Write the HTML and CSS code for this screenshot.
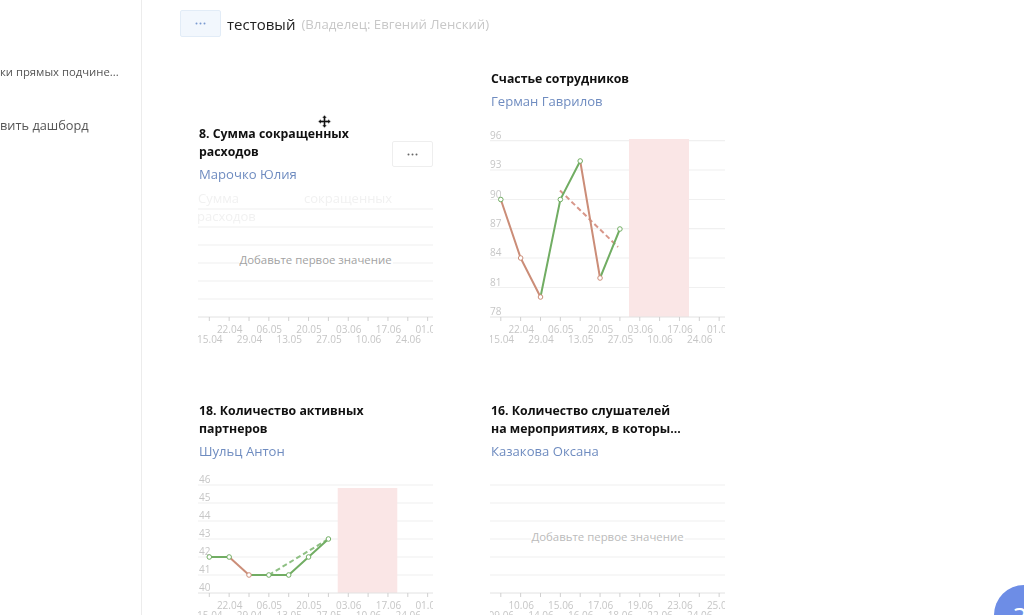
FILE: index.html
```html
<!DOCTYPE html>
<html lang="ru">
<head>
<meta charset="utf-8">
<title>Дашборд</title>
<link rel="stylesheet" href="styles.css">
</head>
<body>
<div class="app">
  <aside class="sidebar">
    <div class="side-item side-small">ки прямых подчине...</div>
    <div class="side-item">вить дашборд</div>
  </aside>
  <main class="main">
    <header class="head">
      <button class="dots-btn dots-blue" type="button"><svg width="11" height="3" viewBox="0 0 11 3"><circle cx="1.5" cy="1.5" r="1"/><circle cx="5.5" cy="1.5" r="1"/><circle cx="9.5" cy="1.5" r="1"/></svg></button>
      <h1 class="head-title">тестовый</h1>
      <span class="head-owner">(Владелец: Евгений Ленский)</span>
    </header>
    <section class="grid">

      <article class="card">
        <h2 class="card-title">8. Сумма сокращенных<br>расходов</h2>
        <a class="card-author">Марочко Юлия</a>
        <div class="chart">
          <svg width="235" height="155" viewBox="0 0 235 155">
            <g class="lines"><path d="M0 19H235M0 37H235M0 55H235M0 73H235M0 91H235M0 109H235"/></g>
            <path class="axis" d="M0 127H235"/>
            <path class="ticks" d="M11.3 127v4M31.15 127v4M51 127v4M70.85 127v4M90.7 127v4M110.55 127v4M130.4 127v4M150.25 127v4M170.1 127v4M189.95 127v4M209.8 127v4M229.65 127v4"/>
            <text class="ghost" x="0" y="13">Сумма</text>
            <text class="ghost" x="106" y="13">сокращенных</text>
            <text class="ghost" x="-1" y="31">расходов</text>
            <g class="xlab">
              <text x="31.65" y="143">22.04</text><text x="71.35" y="143">06.05</text><text x="111.05" y="143">20.05</text><text x="150.75" y="143">03.06</text><text x="190.45" y="143">17.06</text><text x="230.15" y="143">01.07</text>
              <text x="11.8" y="153">15.04</text><text x="51.5" y="153">29.04</text><text x="91.2" y="153">13.05</text><text x="130.9" y="153">27.05</text><text x="170.6" y="153">10.06</text><text x="210.3" y="153">24.06</text>
            </g>
          </svg>
          <span class="empty">Добавьте первое значение</span>
        </div>
        <button class="dots-btn card-menu" type="button"><svg width="11" height="3" viewBox="0 0 11 3"><circle cx="1.5" cy="1.5" r="1"/><circle cx="5.5" cy="1.5" r="1"/><circle cx="9.5" cy="1.5" r="1"/></svg></button>
        <svg class="move-cursor" width="15" height="15" viewBox="0 0 15 15"><path class="cursor-halo" d="M7.5 .5l3 3.300H9V6h2.200V4.500L14.500 7.500l-3.300 3V9H9v2.200h1.500l-3 3.300-3-3.300H6V9H3.800v1.500L.5 7.500l3.300-3V6H6V3.800H4.500z"/><path class="cursor-arrows" d="M7.500 1.500l2 2.300H8.200V6.800h3V5.500l2.300 2-2.300 2V8.200h-3v3h1.300l-2 2.300-2-2.300h1.300v-3h-3v1.300l-2.300-2 2.300-2v1.300h3v-3H5.500z"/></svg>
      </article>

      <article class="card">
        <h2 class="card-title">Счастье сотрудников</h2>
        <a class="card-author">Герман Гаврилов</a>
        <div class="chart">
          <svg width="235" height="228" viewBox="0 0 235 228">
            <g class="lines"><path d="M0 23.700H235M0 53H235M0 82.500H235M0 111.700H235M0 141H235M0 170.500H235"/></g>
            <rect class="band" x="139" y="22" width="60" height="178"/>
            <path class="axis" d="M0 200H235"/>
            <path class="ticks" d="M10.800 200v4M30.650 200v4M50.500 200v4M70.350 200v4M90.200 200v4M110.050 200v4M129.900 200v4M149.750 200v4M169.600 200v4M189.450 200v4M209.300 200v4M229.150 200v4"/>
            <g class="ylab"><text x="0" y="21.500">96</text><text x="0" y="51">93</text><text x="0" y="80.500">90</text><text x="0" y="109.700">87</text><text x="0" y="139">84</text><text x="0" y="168.500">81</text><text x="0" y="198">78</text></g>
            <path class="trend-red" d="M70 73.500L128 130"/>
            <path class="seg-red" d="M10.800 82.500L30.650 141L50.500 180M90.200 44L110.050 161"/>
            <path class="seg-green" d="M50.500 180L70.350 82.500L90.200 44M110.050 161L129.900 112"/>
            <g class="pt-green"><circle cx="10.800" cy="82.500" r="2.300"/><circle cx="70.350" cy="82.500" r="2.300"/><circle cx="90.200" cy="44" r="2.300"/><circle cx="129.900" cy="112" r="2.300"/></g>
            <g class="pt-red"><circle cx="30.650" cy="141" r="2.300"/><circle cx="50.500" cy="180" r="2.300"/><circle cx="110.050" cy="161" r="2.300"/></g>
            <g class="xlab">
              <text x="31.150" y="216">22.04</text><text x="70.850" y="216">06.05</text><text x="110.550" y="216">20.05</text><text x="150.250" y="216">03.06</text><text x="189.950" y="216">17.06</text><text x="229.650" y="216">01.07</text>
              <text x="11.300" y="226">15.04</text><text x="51" y="226">29.04</text><text x="90.700" y="226">13.05</text><text x="130.400" y="226">27.05</text><text x="170.100" y="226">10.06</text><text x="209.800" y="226">24.06</text>
            </g>
          </svg>
        </div>
      </article>

      <article class="card">
        <h2 class="card-title">18. Количество активных<br>партнеров</h2>
        <a class="card-author">Шульц Антон</a>
        <div class="chart">
          <svg width="235" height="155" viewBox="0 0 235 155">
            <g class="lines"><path d="M0 18H235M0 36H235M0 54H235M0 72H235M0 90H235M0 108H235"/></g>
            <rect class="band" x="139.700" y="21" width="59.600" height="105"/>
            <path class="axis" d="M0 126H235"/>
            <path class="ticks" d="M11.300 126v4M31.150 126v4M51 126v4M70.850 126v4M90.700 126v4M110.550 126v4M130.400 126v4M150.250 126v4M170.100 126v4M189.950 126v4M209.800 126v4M229.650 126v4"/>
            <g class="ylab"><text x="1" y="16">46</text><text x="1" y="34">45</text><text x="1" y="52">44</text><text x="1" y="70">43</text><text x="1" y="88">42</text><text x="1" y="106">41</text><text x="1" y="124">40</text></g>
            <path class="trend-green" d="M70.850 108L130.400 72"/>
            <path class="seg-red" d="M31.150 90L51 108"/>
            <path class="seg-green" d="M11.300 90L31.150 90M51 108L70.850 108L90.700 108L110.550 90L130.400 72"/>
            <g class="pt-green"><circle cx="11.300" cy="90" r="2.300"/><circle cx="31.150" cy="90" r="2.300"/><circle cx="70.850" cy="108" r="2.300"/><circle cx="90.700" cy="108" r="2.300"/><circle cx="110.550" cy="90" r="2.300"/><circle cx="130.400" cy="72" r="2.300"/></g>
            <g class="pt-red"><circle cx="51" cy="108" r="2.300"/></g>
            <g class="xlab">
              <text x="31.650" y="142">22.04</text><text x="71.350" y="142">06.05</text><text x="111.050" y="142">20.05</text><text x="150.750" y="142">03.06</text><text x="190.450" y="142">17.06</text><text x="230.150" y="142">01.07</text>
              <text x="11.800" y="152">15.04</text><text x="51.500" y="152">29.04</text><text x="91.200" y="152">13.05</text><text x="130.900" y="152">27.05</text><text x="170.600" y="152">10.06</text><text x="210.300" y="152">24.06</text>
            </g>
          </svg>
        </div>
      </article>

      <article class="card">
        <h2 class="card-title">16. Количество слушателей<br>на мероприятиях, в которы...</h2>
        <a class="card-author">Казакова Оксана</a>
        <div class="chart">
          <svg width="235" height="155" viewBox="0 0 235 155">
            <g class="lines"><path d="M0 18H235M0 36H235M0 54H235M0 72H235M0 90H235M0 108H235"/></g>
            <path class="axis" d="M0 126H235"/>
            <path class="ticks" d="M10.800 126v4M30.650 126v4M50.500 126v4M70.350 126v4M90.200 126v4M110.050 126v4M129.900 126v4M149.750 126v4M169.600 126v4M189.450 126v4M209.300 126v4M229.150 126v4"/>
            <g class="xlab">
              <text x="31.150" y="142">10.06</text><text x="70.850" y="142">15.06</text><text x="110.550" y="142">17.06</text><text x="150.250" y="142">19.06</text><text x="189.950" y="142">23.06</text><text x="229.650" y="142">25.06</text>
              <text x="11.300" y="152">09.06</text><text x="51" y="152">14.06</text><text x="90.700" y="152">16.06</text><text x="130.400" y="152">18.06</text><text x="170.100" y="152">22.06</text><text x="209.800" y="152">24.06</text>
            </g>
          </svg>
          <span class="empty empty-light">Добавьте первое значение</span>
        </div>
      </article>

    </section>
  </main>
  <div class="help">?</div>
</div>
</body>
</html>
```

FILE: styles.css
```css
* { box-sizing: border-box; }
html, body { margin: 0; height: 100%; overflow: hidden; background: #fff; }
body { font-family: "Open Sans", "Noto Sans", sans-serif; color: #222; }
.app { display: flex; height: 615px; overflow: hidden; filter: blur(.45px); }

.sidebar { flex: 0 0 142px; border-right: 1px solid #ececec; padding-top: 62px; overflow: hidden; }
.side-item { height: 20px; line-height: 20px; font-size: 12.800px; color: #555; white-space: nowrap; }
.side-small { font-size: 11.300px; margin-bottom: 33px; }

.main { flex: 1; padding: 10px 0 0 38px; overflow: hidden; min-width: 0; }
.head { display: flex; align-items: center; height: 27px; }
.dots-btn { display: flex; align-items: center; justify-content: center; width: 41px; height: 27px; padding: 0; background: #fff; border: 1px solid #eee; border-radius: 2px; }
.dots-btn svg { fill: #666; }
.dots-blue { background: #f2f7fd; border-color: #e2ecf7; margin-right: 6px; }
.dots-blue svg { fill: #7a9bd0; }
.head-title { margin: 0 6px 0 0; font-size: 15px; font-weight: 400; color: #222; }
.head-owner { font-size: 13.200px; color: #c8c8c8; }

.grid { display: grid; grid-template-columns: 234px 234px; column-gap: 58px; row-gap: 57px; align-items: end; margin: 32.500px 0 0 18px; }
.card { position: relative; width: 234px; }
.card-title { margin: 0; padding-left: 1px; font-size: 12.300px; line-height: 17.500px; font-weight: 700; color: #111; }
.card-author { display: block; margin-top: 2px; padding-left: 1px; height: 24px; line-height: 24px; font-size: 13.100px; color: #6f8cc0; }
.chart { position: relative; margin-top: 4px; width: 235px; }
.chart svg { display: block; overflow: hidden; }
.lines path { stroke: #f0f0f0; stroke-width: 1.200; fill: none; }
.axis { stroke: #e2e2e2; fill: none; }
.ticks { stroke: #d0d0d0; fill: none; }
.band { fill: #fae6e6; }
.ghost { font-size: 13px; fill: #f1f1f1; }
.xlab text { font-size: 10px; fill: #c6c6c6; text-anchor: middle; }
.ylab text { font-size: 10px; fill: #c6c6c6; }
.seg-red, .seg-green, .trend-red, .trend-green { fill: none; stroke-width: 2; }
.seg-red { stroke: #cb8d78; }
.seg-green { stroke: #71ad63; }
.trend-red { stroke: #d8978a; stroke-dasharray: 5 3; }
.trend-green { stroke: #8fc084; stroke-dasharray: 5 3; }
.pt-green circle, .pt-red circle { fill: #fff; stroke-width: 1; }
.pt-green circle { stroke: #71ad63; }
.pt-red circle { stroke: #cb8d78; }
.empty { position: absolute; left: 50%; top: 61px; transform: translateX(-50%); padding: 0 1px; background: #fff; font-size: 11.400px; line-height: 18px; color: #a2a2a2; white-space: nowrap; }
.empty-light { color: #bbb; }
.card-menu { position: absolute; right: -1px; top: 16px; height: 26px; }
.move-cursor { position: absolute; left: 119px; top: -11px; }
.cursor-halo { fill: #ddd; }
.cursor-arrows { fill: #111; }
.help { position: absolute; left: 994px; top: 585px; width: 60px; height: 60px; border-radius: 50%; background: #6d8de6; color: #fff; font-size: 28px; line-height: 64px; padding-left: 20px; }
```
